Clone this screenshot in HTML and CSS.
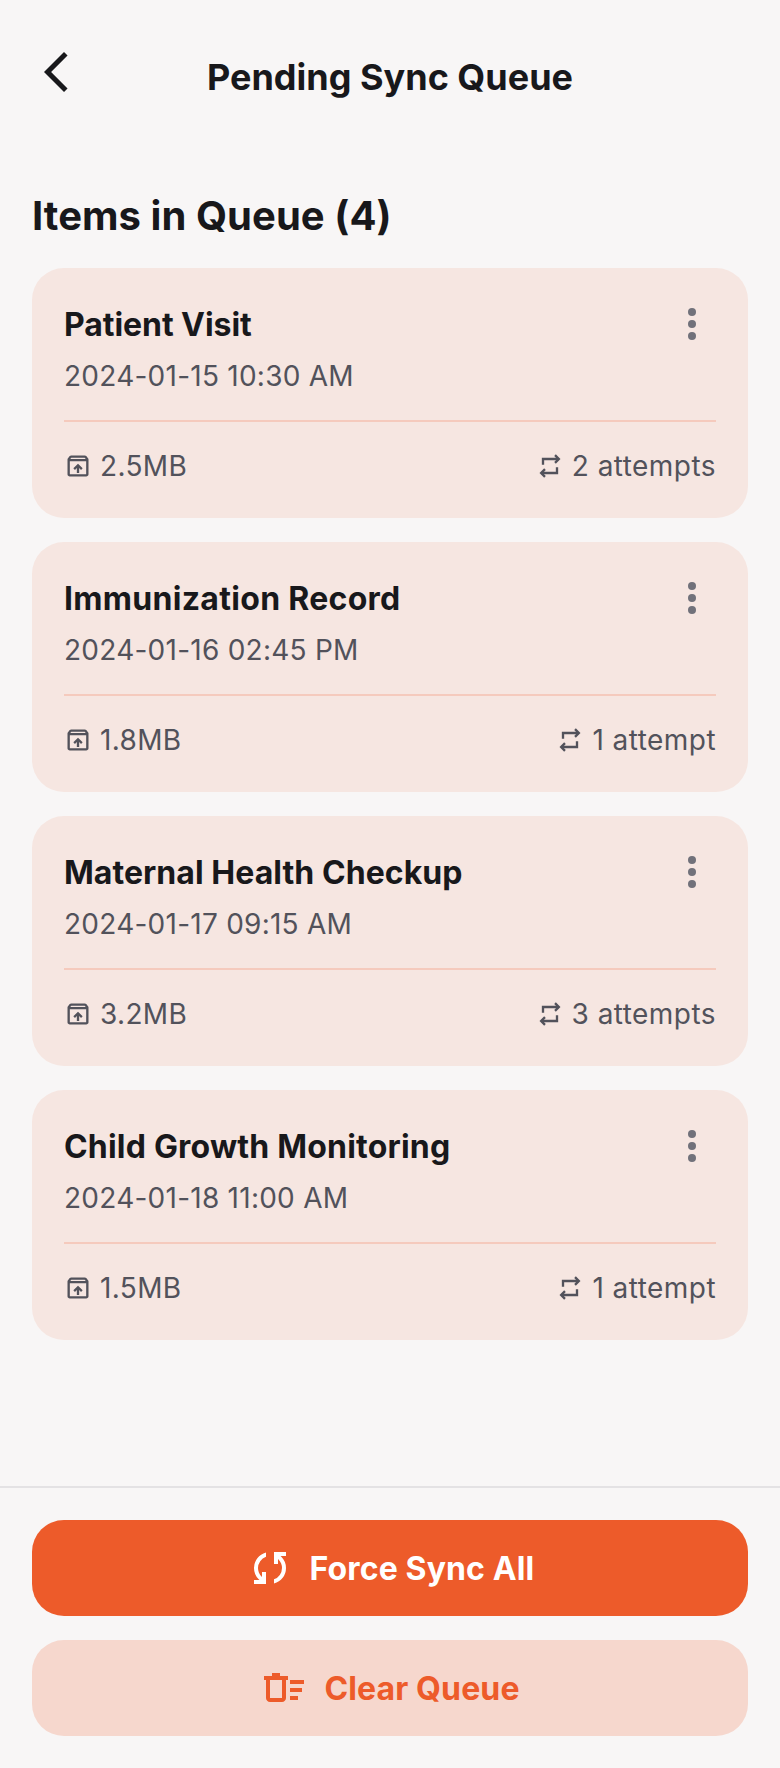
FILE: index.html
```html
<!DOCTYPE html>
<html lang="en">
<head>
<meta charset="utf-8">
<title>Pending Sync Queue</title>
<link rel="stylesheet" href="styles.css">
</head>
<body>
<svg class="sprite" aria-hidden="true">
  <symbol id="archive" viewBox="0 0 24 24"><path d="M11 18h2v-4.200l1.600 1.600L16 14l-4-4-4 4 1.400 1.400 1.600-1.600V18ZM5 8v11h14V8H5Zm0 13q-.825 0-1.413-.588T3 19V6.525q0-.35.113-.675t.337-.6L4.700 3.725q.275-.35.687-.538T6.250 3h11.500q.45 0 .863.188t.687.537l1.250 1.525q.225.275.338.6t.112.675V19q0 .825-.587 1.413T19 21H5Zm.400-15h13.200l-.850-1H6.250L5.400 6Z"/></symbol>
  <symbol id="repeat" viewBox="0 0 24 24"><path d="m7 22-4-4 4-4 1.400 1.450L6.850 17H17v-4h2v6H6.850l1.550 1.550L7 22ZM5 11V5h12.150L15.600 3.450 17 2l4 4-4 4-1.400-1.450L17.150 7H7v4H5Z"/></symbol>
  <symbol id="dots" viewBox="0 0 48 48"><circle cx="24" cy="12" r="4"/><circle cx="24" cy="24" r="4"/><circle cx="24" cy="36" r="4"/></symbol>
</svg>
<div class="screen">
  <header class="header">
    <button class="back" aria-label="Back"><svg class="icon-lg" viewBox="0 0 24 24"><path d="M16 22 6 12 16 2l1.775 1.775L9.550 12l8.225 8.225L16 22Z"/></svg></button>
    <h1 class="title">Pending Sync Queue</h1>
  </header>
  <main class="content">
    <h2 class="heading">Items in Queue (4)</h2>
    <div class="list">
      <article class="card">
        <div class="card-top">
          <div><h3 class="name name-tight">Patient Visit</h3><p class="date">2024-01-15 10:30 AM</p></div>
          <button class="more" aria-label="More"><svg class="icon-lg"><use href="#dots"/></svg></button>
        </div>
        <div class="meta">
          <span class="stat"><svg class="icon-sm"><use href="#archive"/></svg>2.5MB</span>
          <span class="stat tries"><svg class="icon-sm"><use href="#repeat"/></svg>2 attempts</span>
        </div>
      </article>
      <article class="card">
        <div class="card-top">
          <div><h3 class="name name-wide">Immunization Record</h3><p class="date">2024-01-16 02:45 PM</p></div>
          <button class="more" aria-label="More"><svg class="icon-lg"><use href="#dots"/></svg></button>
        </div>
        <div class="meta">
          <span class="stat"><svg class="icon-sm"><use href="#archive"/></svg>1.8MB</span>
          <span class="stat tries"><svg class="icon-sm"><use href="#repeat"/></svg>1 attempt</span>
        </div>
      </article>
      <article class="card">
        <div class="card-top">
          <div><h3 class="name">Maternal Health Checkup</h3><p class="date">2024-01-17 09:15 AM</p></div>
          <button class="more" aria-label="More"><svg class="icon-lg"><use href="#dots"/></svg></button>
        </div>
        <div class="meta">
          <span class="stat"><svg class="icon-sm"><use href="#archive"/></svg>3.2MB</span>
          <span class="stat tries"><svg class="icon-sm"><use href="#repeat"/></svg>3 attempts</span>
        </div>
      </article>
      <article class="card">
        <div class="card-top">
          <div><h3 class="name name-loose">Child Growth Monitoring</h3><p class="date">2024-01-18 11:00 AM</p></div>
          <button class="more" aria-label="More"><svg class="icon-lg"><use href="#dots"/></svg></button>
        </div>
        <div class="meta">
          <span class="stat"><svg class="icon-sm"><use href="#archive"/></svg>1.5MB</span>
          <span class="stat tries"><svg class="icon-sm"><use href="#repeat"/></svg>1 attempt</span>
        </div>
      </article>
    </div>
  </main>
  <footer class="actions">
    <button class="btn btn-primary"><svg class="icon-lg" viewBox="0 0 24 24"><path d="M4 20v-2h2.750l-.4-.35q-1.225-1.225-1.788-2.663T4 12.050q0-2.775 1.663-4.937T10 4.250v2.100q-1.800.65-2.900 2.213T6 12.050q0 1.125.425 2.188T7.750 16.200l.25.25V14h2v6H4Zm10-.25v-2.100q1.800-.65 2.900-2.212T18 11.950q0-1.125-.425-2.187T16.250 7.800L16 7.550V10h-2V4h6v2h-2.750l.4.350q1.225 1.225 1.788 2.663T20 11.950q0 2.775-1.662 4.938T14 19.750Z"/></svg><span class="label">Force Sync All</span></button>
    <button class="btn btn-soft"><svg class="icon-lg" viewBox="0 0 24 24"><path d="M15 18v-2h4v2h-4Zm0-8V8h7v2h-7Zm0 4v-2h6v2h-6ZM3 8H2V6h4V4.500h4V6h4v2h-1v9q0 .825-.588 1.413T11 19H5q-.825 0-1.413-.588T3 17V8Zm2 0v9h6V8H5Z"/></svg><span class="label">Clear Queue</span></button>
  </footer>
</div>
</body>
</html>
```
FILE: styles.css
```css
* { box-sizing: border-box; }
body, h1, h2, h3, p { margin: 0; }
body {
  background: #f8f6f6;
  color: #18181b;
  font-family: Inter, "Liberation Sans", sans-serif;
}
button {
  border: 0;
  padding: 0;
  background: none;
  color: inherit;
  font: inherit;
}
svg { display: block; flex: none; fill: currentColor; }
.sprite { display: none; }
.icon-lg { width: 48px; height: 48px; }
.icon-sm { width: 28px; height: 28px; }
.screen {
  display: flex;
  flex-direction: column;
  min-height: 1768px;
}
.header {
  display: grid;
  grid-template-columns: 48px 1fr 48px;
  align-items: center;
  height: 154px;
  padding: 0 32px;
}
.back { padding-bottom: 10px; }
.title {
  font-size: 36px;
  line-height: 46px;
  font-weight: 700;
  text-align: center;
}
.content { flex: 1; padding: 37px 32px 0; }
.heading {
  font-size: 40px;
  line-height: 50px;
  font-weight: 700;
  letter-spacing: 0.05px;
  margin-bottom: 27px;
}
.list { display: grid; gap: 24px; }
.card {
  padding: 32px;
  border-radius: 32px;
  background: #f6e6e1;
}
.card-top { display: flex; justify-content: space-between; align-items: flex-start; }
.name {
  padding-top: 2px;
  font-size: 32px;
  line-height: 46px;
  font-weight: 700;
  letter-spacing: 0.05px;
}
.name-tight { letter-spacing: -0.06px; }
.name-loose { letter-spacing: 0.2px; }
.name-wide { letter-spacing: 0.3px; }
.date {
  margin-top: 8px;
  font-size: 28px;
  line-height: 40px;
  letter-spacing: 0.25px;
  color: #52525b;
}
.more { color: #71717a; }
.meta {
  display: flex;
  justify-content: space-between;
  margin-top: 24px;
  padding-top: 24px;
  border-top: 2px solid #f5cabd;
  color: #52525b;
  font-size: 28px;
  line-height: 40px;
}
.stat { display: flex; align-items: center; gap: 8px; letter-spacing: 0.35px; }
.tries { letter-spacing: 0.45px; }
.actions {
  display: grid;
  gap: 24px;
  padding: 32px;
  border-top: 2px solid #e4e2e4;
}
.btn {
  display: flex;
  align-items: center;
  justify-content: center;
  gap: 16px;
  height: 96px;
  border-radius: 32px;
  font-size: 32px;
  font-weight: 700;
  letter-spacing: 0.13px;
}
.label { padding-top: 1px; }
.btn-primary { background: #ed5b2a; color: #fff; }
.btn-soft { background: #f6d7cd; color: #ed5b2a; }
```
